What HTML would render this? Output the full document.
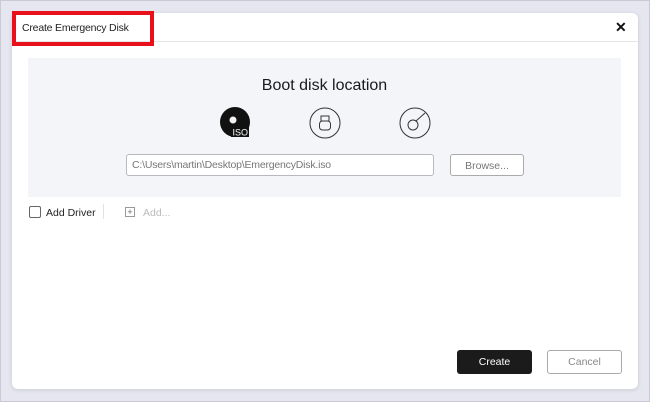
<!DOCTYPE html>
<html><head><style>
*{margin:0;padding:0;box-sizing:border-box}
body{width:650px;height:402px;background:#e5e6ef;font-family:"Liberation Sans",sans-serif;position:relative;overflow:hidden}
.frame{position:absolute;left:0;top:0;width:650px;height:402px;border:1px solid #c9cad3}
.dlg{position:absolute;left:12px;top:13px;width:626px;height:376px;background:#fff;border-radius:6px;box-shadow:0 1px 4px rgba(0,0,0,.12)}
.hdr{position:absolute;left:0;top:0;width:100%;height:29px;border-bottom:1px solid #e6e6ea}
.title{position:absolute;left:10px;top:9px;font-size:10.5px;color:#222;letter-spacing:-0.2px}
.red{position:absolute;left:12px;top:11px;width:142px;height:35px;border:4px solid #e8101a}
.x{position:absolute;left:615px;top:19px;font-size:14px;color:#111;font-weight:bold}
.panel{position:absolute;left:28px;top:58px;width:593px;height:139px;background:#f4f5f9}
.h{position:absolute;left:0;width:100%;top:19px;text-align:center;font-size:16px;color:#1a1a1a}
.inp{position:absolute;left:126px;top:154px;width:308px;height:22px;border:1px solid #b8b8bf;border-radius:3px;background:#fff;font-size:10.5px;color:#777;padding:4px 5px;letter-spacing:-0.2px}
.btn{position:absolute;border-radius:3px;font-size:10.5px;text-align:center;line-height:22px}
</style></head><body>
<div class="frame"></div>
<div class="dlg"><div class="hdr"><div class="title">Create Emergency Disk</div></div></div>
<div class="red"></div>
<div class="x">✕</div>
<div class="panel"><div class="h">Boot disk location</div></div>
<svg style="position:absolute;left:0;top:0" width="650" height="402">
<circle cx="235" cy="122" r="15" fill="#111"/><circle cx="233" cy="120" r="3.5" fill="#f4f5f9"/>
<rect x="231" y="126" width="18" height="11" fill="#111"/><text x="232.5" y="135.5" font-size="9" fill="#fff" font-family="Liberation Sans">ISO</text>
<circle cx="325" cy="123" r="15" fill="none" stroke="#333" stroke-width="1"/>
<rect x="321" y="116" width="8" height="5" fill="none" stroke="#333"/><rect x="319.5" y="121" width="11" height="9" rx="3" fill="none" stroke="#333"/>
<circle cx="415" cy="123" r="15" fill="none" stroke="#333"/><circle cx="413" cy="125" r="5" fill="none" stroke="#333"/><path d="M416 121L425 113" stroke="#333"/>
</svg>
<div class="inp">C:\Users\martin\Desktop\EmergencyDisk.iso</div>
<div class="btn" style="left:450px;top:154px;width:74px;height:22px;border:1px solid #aaa;color:#777;background:#fff">Browse...</div>
<div style="position:absolute;left:29px;top:206px;width:12px;height:12px;border:1px solid #666;border-radius:2px;background:#fff"></div>
<div style="position:absolute;left:46px;top:207px;font-size:10.5px;color:#222">Add Driver</div>
<div style="position:absolute;left:103px;top:204px;width:1px;height:15px;background:#e2e2e6"></div>
<div style="position:absolute;left:125px;top:207px;width:10px;height:10px;border:1px solid #999;font-size:9px;line-height:8px;text-align:center;color:#666">+</div>
<div style="position:absolute;left:143px;top:207px;font-size:10.5px;color:#bbb">Add...</div>
<div class="btn" style="left:457px;top:350px;width:75px;height:24px;background:#1b1b1b;color:#fff;line-height:24px">Create</div>
<div class="btn" style="left:547px;top:350px;width:75px;height:24px;border:1px solid #aaa;color:#888;background:#fff">Cancel</div>
</body></html>
